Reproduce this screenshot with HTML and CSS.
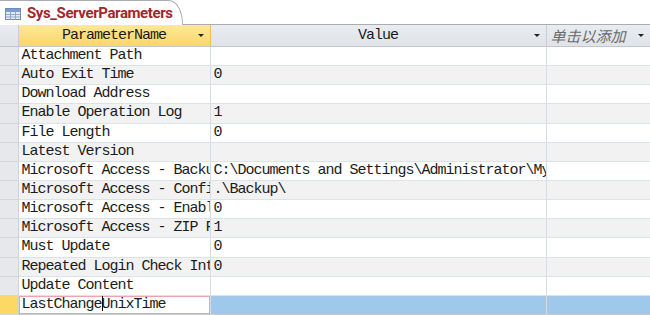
FILE: index.html
```html
<!DOCTYPE html>
<html lang="zh-cn">
<head>
  <meta charset="UTF-8" />
  <title>Sys_ServerParameters</title>
  <link rel="stylesheet" href="styles.css">
</head>
<body>
  <div class="tabbar">
    <div class="tab">
      <svg class="tab-icon" width="16" height="12" viewBox="0 0 16 12">
        <rect x="0.5" y="0.5" width="15" height="11" fill="#e4ecf7" stroke="#6f8db8"/>
        <rect x="1" y="1" width="14" height="3" fill="#7d9cc8"/>
        <path d="M1 6.5H15M1 9H15M5.5 4V11.5M10.5 4V11.5" stroke="#8ea8cc" stroke-width="1"/>
      </svg>
      <span class="tab-title">Sys_ServerParameters</span>
    </div>
  </div>

  <table class="grid">
    <colgroup>
      <col class="c-sel">
      <col class="c-name">
      <col class="c-value">
      <col class="c-add">
    </colgroup>
    <thead>
      <tr>
        <th class="sel corner"></th>
        <th class="active-col">ParameterName<span class="arrow"></span></th>
        <th>Value<span class="arrow"></span></th>
        <th class="add">单击以添加<span class="arrow"></span></th>
      </tr>
    </thead>
    <tbody>
      <tr><td class="sel"></td><td>Attachment Path</td><td></td><td></td></tr>
      <tr><td class="sel"></td><td>Auto Exit Time</td><td>0</td><td></td></tr>
      <tr><td class="sel"></td><td>Download Address</td><td></td><td></td></tr>
      <tr><td class="sel"></td><td>Enable Operation Log</td><td>1</td><td></td></tr>
      <tr><td class="sel"></td><td>File Length</td><td>0</td><td></td></tr>
      <tr><td class="sel"></td><td>Latest Version</td><td></td><td></td></tr>
      <tr><td class="sel"></td><td><div class="cell">Microsoft Access - Backup</div></td><td><div class="cell">C:\Documents and Settings\Administrator\My Documents</div></td><td></td></tr>
      <tr><td class="sel"></td><td><div class="cell">Microsoft Access - Config</div></td><td>.\Backup\</td><td></td></tr>
      <tr><td class="sel"></td><td><div class="cell">Microsoft Access - Enable</div></td><td>0</td><td></td></tr>
      <tr><td class="sel"></td><td><div class="cell">Microsoft Access - ZIP File</div></td><td>1</td><td></td></tr>
      <tr><td class="sel"></td><td>Must Update</td><td>0</td><td></td></tr>
      <tr><td class="sel"></td><td><div class="cell">Repeated Login Check Interval</div></td><td>0</td><td></td></tr>
      <tr><td class="sel"></td><td>Update Content</td><td></td><td></td></tr>
      <tr class="current"><td class="sel"></td><td class="editing">LastChange<span class="caret"></span>UnixTime</td><td></td><td></td></tr>
    </tbody>
  </table>
</body>
</html>
```

FILE: styles.css
```css
body {
  margin: 0;
  padding: 0;
  background-color: #fff;
  font-family: 'Liberation Mono', 'Noto Sans CJK SC', monospace;
  overflow: hidden;
}

.tabbar {
  height: 24px;
  border-bottom: 1px solid #a9acb2;
  display: flex;
  align-items: flex-end;
}

.tab {
  display: flex;
  align-items: center;
  gap: 6px;
  width: 183px;
  height: 25px;
  padding: 0 0 0 5px;
  margin-bottom: -1px;
  background-color: #fff;
  border: 1px solid #a9acb2;
  border-left: none;
  border-bottom: none;
  border-top-right-radius: 14px 24px;
  box-sizing: border-box;
}

.tab-icon {
  display: block;
  margin-top: 1px;
}

.tab-title {
  font-family: Roboto, 'Liberation Sans', sans-serif;
  font-weight: bold;
  font-size: 15px;
  color: #a3262c;
  letter-spacing: -0.4px;
}

.grid {
  border-collapse: collapse;
  table-layout: fixed;
  width: 650px;
  font-size: 15px;
  letter-spacing: -1px;
  color: #1b1b1b;
}

.c-sel { width: 18px; }
.c-name { width: 192px; }
.c-value { width: 336px; }
.c-add { width: 104px; }

.grid th {
  height: 20px;
  padding: 0;
  font-weight: normal;
  background: linear-gradient(#e9ecf0, #dfe2e7);
  border-right: 1px solid #c9ced6;
  border-bottom: 1px solid #c2c7cf;
  position: relative;
  text-align: center;
  white-space: nowrap;
  overflow: hidden;
}

.grid th.active-col {
  background: linear-gradient(#fde79a, #f9d766);
  border-right-color: #e8c35a;
}

.grid th.add {
  font-family: 'Noto Sans CJK SC', sans-serif;
  font-style: italic;
  font-size: 15px;
  letter-spacing: 0;
  color: #6a6a6a;
  text-align: left;
  padding-left: 4px;
}

.grid th.corner {
  background-color: #e6e7ea;
}

.arrow {
  position: absolute;
  right: 6px;
  top: 9px;
  width: 0;
  height: 0;
  border-left: 3px solid transparent;
  border-right: 3px solid transparent;
  border-top: 3px solid #222;
}

.grid td {
  height: 18.15px;
  line-height: 18px;
  padding: 0 0 0 3px;
  border-right: 1px solid #d6dce6;
  border-bottom: 1px solid #dde1e8;
  white-space: nowrap;
  overflow: hidden;
}

.cell {
  width: 100%;
  overflow: hidden;
  white-space: nowrap;
}

.grid tbody tr:nth-child(even) td {
  background-color: #f2f2f2;
}

.grid tbody td.sel,
.grid tbody tr:nth-child(even) td.sel {
  padding: 0;
  background-color: #e7e8eb;
  border-right: 1px solid #cfd2d8;
  border-bottom: 1px solid #d2d5da;
}

.grid tbody tr.current td {
  background-color: #9fc8ea;
  border-bottom-color: #c7ccd4;
}

.grid tbody tr.current td.sel {
  background-color: #fcd867;
}

.grid tbody tr.current td.editing {
  background-color: #fff;
  box-shadow: inset 0 0 0 1px #f0a2ab;
}

.caret {
  display: inline-block;
  width: 1px;
  height: 15px;
  background-color: #000;
  vertical-align: -3px;
  margin-right: -1px;
}
```
